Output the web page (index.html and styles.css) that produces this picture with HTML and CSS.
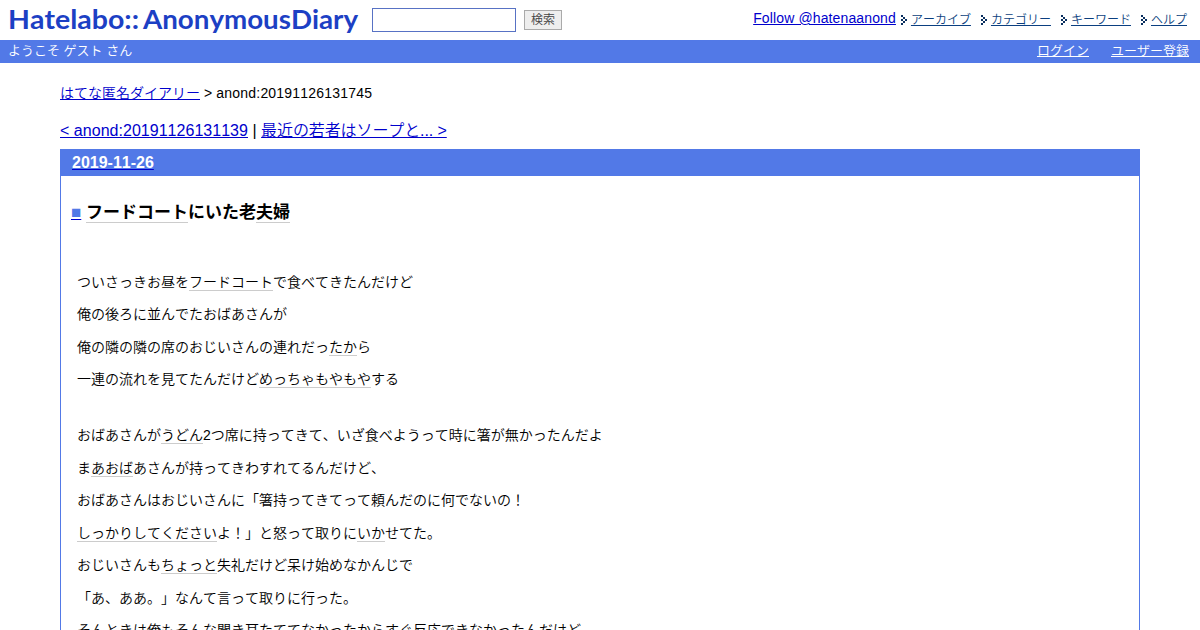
FILE: index.html
```html
<!DOCTYPE html>
<html lang="ja">
  <head>
    <meta charset="UTF-8" />
    <title>フードコートにいた老夫婦</title>
    <link rel="stylesheet" href="styles.css">
  </head>
  <body>
    <svg width="0" height="0" class="sprite">
      <symbol id="arrow" viewBox="0 0 6 10" shape-rendering="crispEdges">
        <path fill="#0b2f5e" d="M0 0h2v2h-2zM2 2h2v2h-2zM4 4h2v2h-2zM2 6h2v2h-2zM0 8h2v2h-2zM0 4h2v2h-2z"/>
      </symbol>
    </svg>

    <header id="banner">
      <a href="#" class="logo">
        <svg width="364" height="38">
          <text x="8" y="29" textLength="131" lengthAdjust="spacingAndGlyphs">Hatelabo::</text>
          <text x="143" y="29" textLength="215" lengthAdjust="spacingAndGlyphs">AnonymousDiary</text>
        </svg>
      </a>
      <form class="search">
        <input type="text" class="search-word">
        <button type="button" class="search-button">検索</button>
      </form>
      <ul class="menu">
        <li class="follow"><a href="#">Follow @hatenaanond</a></li>
        <li><svg class="arrow"><use href="#arrow"/></svg><a href="#">アーカイブ</a></li>
        <li><svg class="arrow"><use href="#arrow"/></svg><a href="#">カテゴリー</a></li>
        <li><svg class="arrow"><use href="#arrow"/></svg><a href="#">キーワード</a></li>
        <li><svg class="arrow"><use href="#arrow"/></svg><a href="#">ヘルプ</a></li>
      </ul>
    </header>

    <div id="bannersub">
      <span>ようこそ ゲスト さん</span>
      <nav>
        <a href="#">ログイン</a>
        <a href="#">ユーザー登録</a>
      </nav>
    </div>

    <main>
      <p class="breadcrumb"><a href="#">はてな匿名ダイアリー</a> <span>&gt; anond:20191126131745</span></p>
      <p class="pager"><a href="#">&lt; anond:20191126131139</a> | <a href="#" class="next">最近の若者はソープと... &gt;</a></p>

      <div class="day">
        <h2><a href="#"><span class="date">2019-11-26</span></a></h2>
        <div class="section">
          <h3><a href="#"><span class="sanchor">■</span></a> <a class="keyword">フードコート</a>にいた老<a class="keyword">夫婦</a></h3>
          <p>ついさっきお昼を<a class="keyword">フードコート</a>で食べてきたんだけど</p>
          <p>俺の後ろに並んでたおばあさんが</p>
          <p>俺の隣の隣の席のおじいさんの連れだっ<a class="keyword">たか</a>ら</p>
          <p>一連の流れを見てたんだけど<a class="keyword">めっちゃ</a><a class="keyword">もやもや</a>する</p>
          <p class="blank"></p>
          <p>おばあさんが<a class="keyword">うどん</a>2つ席に持ってきて、いざ食べようって時に箸が無かったんだよ</p>
          <p>ま<a class="keyword">あおば</a>あさんが持ってきわすれてるんだけど、</p>
          <p>おばあさんはおじいさんに「箸持ってきてって頼んだのに何でないの！</p>
          <p><a class="keyword">しっかりしてください</a>よ！」と怒って取りに<a class="keyword">いか</a>せてた。</p>
          <p>おじいさんも<a class="keyword">ちょっと</a>失礼だけど呆け始めなかんじで</p>
          <p>「あ、ああ。」なんて言って取りに行った。</p>
          <p>そんときは俺もそんな聞き耳たててなかったからすぐ反応できなかったんだけど</p>
        </div>
      </div>
    </main>
  </body>
</html>
```

FILE: styles.css
```css
* {
  margin: 0;
  padding: 0;
  box-sizing: border-box;
}

body {
  background-color: #fff;
  color: #000;
  font-family: "Liberation Sans", "Noto Sans CJK JP", sans-serif;
  font-weight: 350;
  font-kerning: none;
  text-spacing-trim: space-all;
  height: 630px;
  overflow: hidden;
}

a {
  color: #0000cc;
}

.sprite {
  display: block;
}

/* Header */
#banner {
  display: flex;
  height: 40px;
}

.logo svg {
  display: block;
}

.logo text {
  font-family: Lato, sans-serif;
  font-size: 26px;
  font-weight: 700;
  fill: #1c40c4;
}

.search {
  display: flex;
  align-items: flex-start;
  gap: 8px;
  padding: 8px 0 0 8px;
}

.search-word {
  width: 144px;
  height: 24px;
  border: 1px solid #5872c4;
}

.search-button {
  width: 38px;
  height: 20px;
  margin-top: 2px;
  border: 1px solid #aaa;
  background-color: #eee;
  color: #444;
  font-family: inherit;
  font-size: 12px;
  font-weight: inherit;
  line-height: 16px;
}

.menu {
  display: flex;
  align-items: flex-start;
  gap: 10px;
  margin-left: auto;
  padding: 11px 13px 0 0;
  list-style: none;
  font-size: 12px;
  line-height: 18px;
}

.menu a {
  color: #0b3f80;
}

.menu .follow {
  margin: -2px -5px 0 0;
  font-size: 14px;
  letter-spacing: 0.13px;
}

.menu .follow a {
  color: #0000cc;
}

.arrow {
  width: 6px;
  height: 10px;
  margin-right: 4px;
  vertical-align: -1px;
}

#bannersub {
  display: flex;
  justify-content: space-between;
  height: 23px;
  padding: 0 11px 0 8px;
  background-color: #5279e7;
  color: #fff;
  font-size: 13px;
  line-height: 21px;
}

#bannersub nav {
  display: flex;
  gap: 22px;
}

#bannersub a {
  color: #fff;
}

/* Content */
main {
  margin: 0 60px;
}

.breadcrumb {
  padding-top: 20px;
  font-size: 14px;
  line-height: 20px;
}

.breadcrumb span {
  letter-spacing: 0.2px;
}

.pager {
  margin-top: 16px;
  font-size: 16px;
  line-height: 24px;
  letter-spacing: 0.03px;
}

.pager .next {
  letter-spacing: -0.1px;
}

.day {
  margin-top: 6px;
  border: 1px solid #5279e7;
}

.day h2 {
  height: 26px;
  padding-left: 11px;
  background-color: #5279e7;
  font-size: 16px;
  line-height: 26px;
}

.date {
  color: #fff;
}

.section {
  padding: 0 16px;
  font-size: 14px;
}

.section h3 {
  margin: 23px 0 43.5px -6px;
  font-size: 17px;
  line-height: 28px;
}

.section p {
  margin-bottom: 10px;
  line-height: 22.5px;
}

.section .blank {
  height: 13.5px;
}

.sanchor {
  color: #5279e7;
}

.keyword {
  color: #000;
  border-bottom: 1px solid #ccc;
  text-decoration: none;
}
```
